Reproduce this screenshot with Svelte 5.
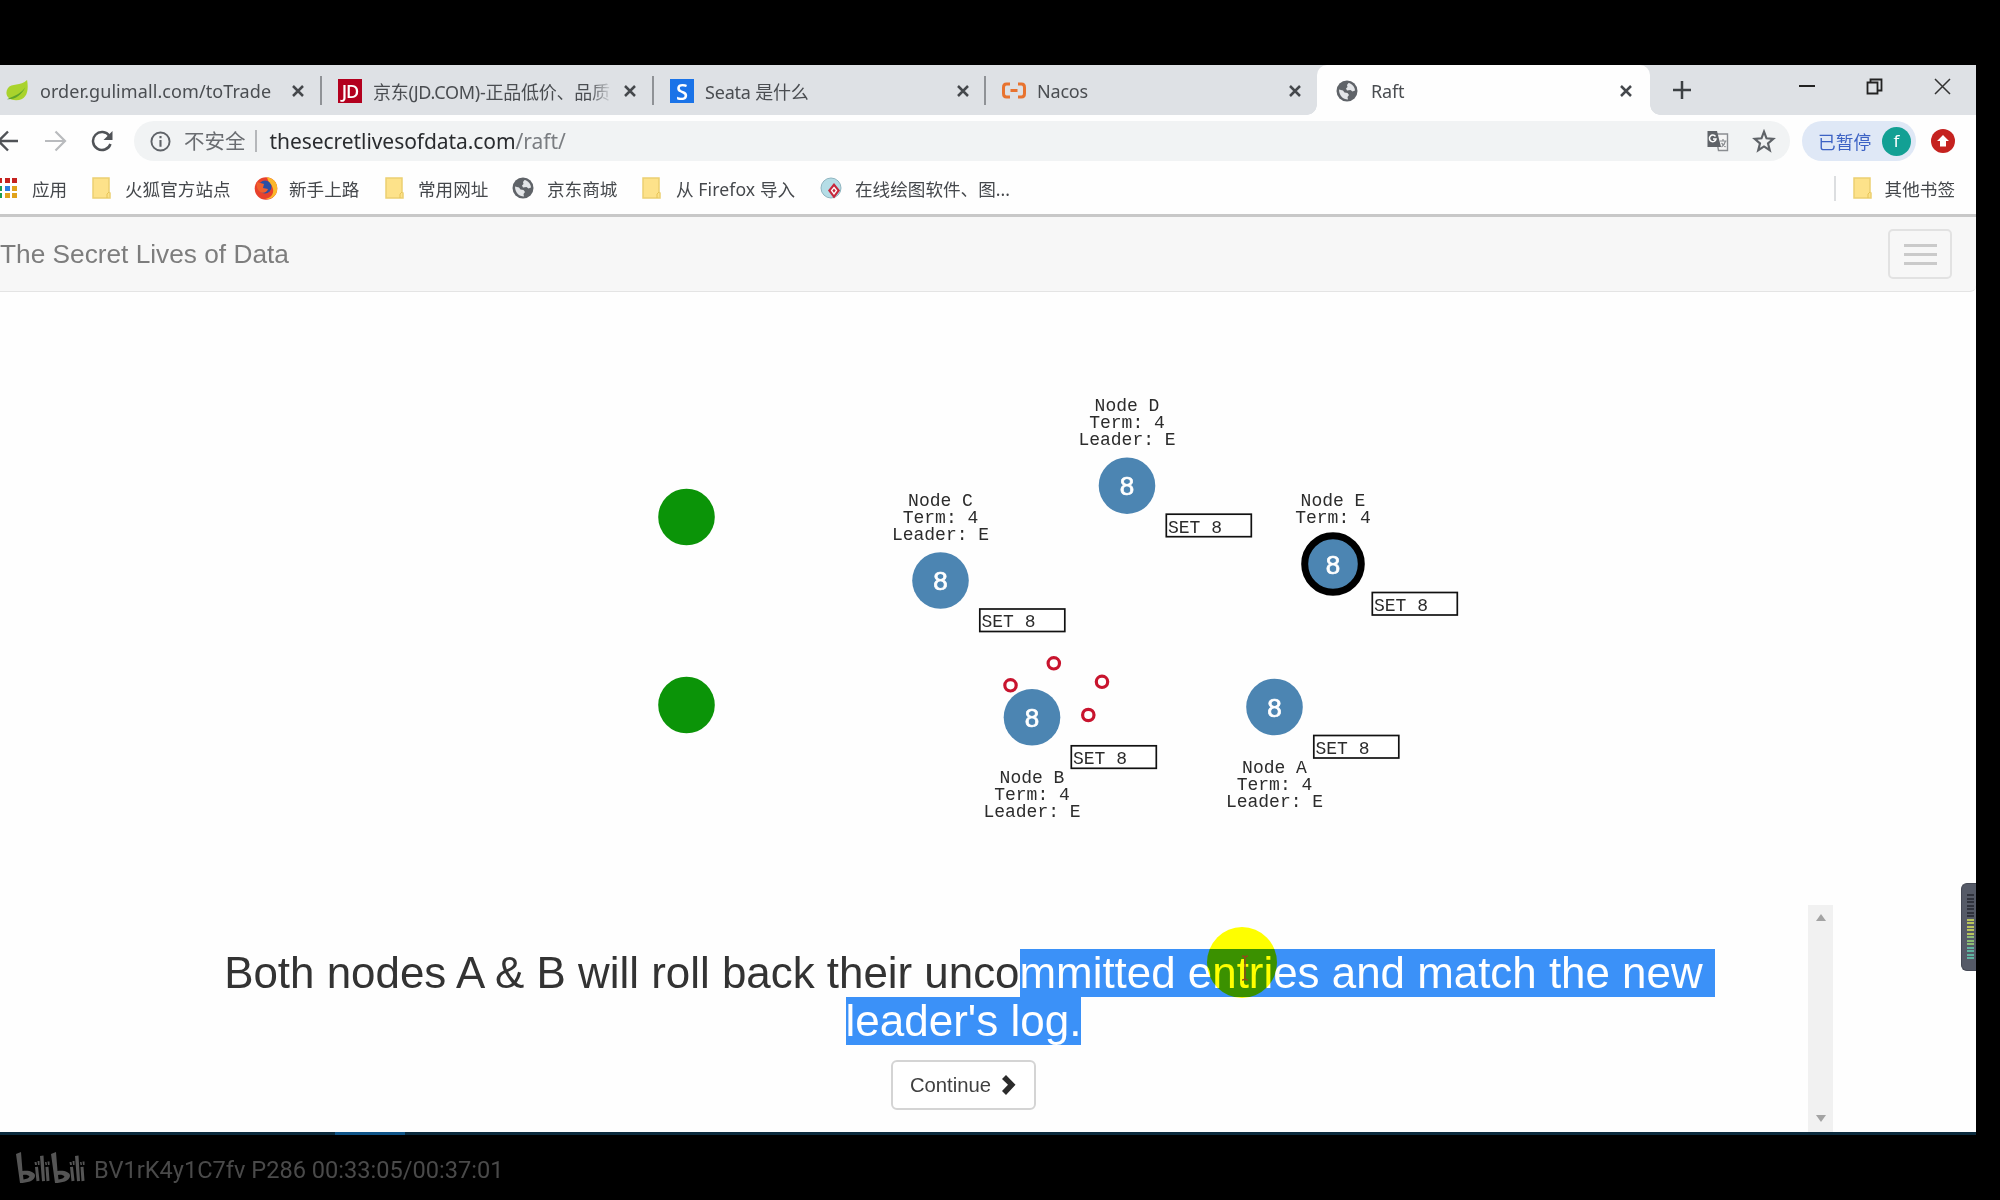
<script>
  const nodes = [
    { name: 'D', x: 1127, y: 485.7, lines: ['Node D', 'Term: 4', 'Leader: E'], above: true },
    { name: 'C', x: 940.5, y: 580.5, lines: ['Node C', 'Term: 4', 'Leader: E'], above: true },
    { name: 'E', x: 1333, y: 564, lines: ['Node E', 'Term: 4'], above: true, leader: true },
    { name: 'B', x: 1032, y: 717.3, lines: ['Node B', 'Term: 4', 'Leader: E'] },
    { name: 'A', x: 1274.5, y: 707, lines: ['Node A', 'Term: 4', 'Leader: E'] }
  ];
  const clients = [[686.5, 517], [686.5, 705]];
  const messages = [[1053.8, 663.3], [1010.5, 685.3], [1102, 681.8], [1088.3, 715]];
  const baseline = (n, i) =>
    n.above ? n.y - 41 - (n.lines.length - 1 - i) * 16.8 : n.y + 66 + i * 16.8;
  const appColors = ['#c5221f', '#c5221f', '#c5221f', '#1a9c50', '#2b7de0', '#e0a21b', '#1a9c50', '#e0a21b', '#e0a21b'];
  const meter = Array.from({ length: 19 }, (_, i) => i);
  const meterColor = (i) => (i < 7 ? '#2f323c' : i < 12 ? '#b9c45c' : i < 15 ? '#8cbd74' : '#5fb3a0');
</script>

{#snippet globe()}
  <svg class="globe" viewBox="0 0 22 22"><circle cx="11" cy="11" r="10.500" fill="#5f6368" /><path d="M12.500 3c3.500.5 6.500 4 6.500 7.500l-2.500 1-2-1.500-3.500.5-1-2 1.500-1.500-.5-2zM3 9.500l4 1 1.500 2 3 .5 1.500 2-1.500 2 .5 2.500c-5 0-9-4-9-10z" fill="#e3e5e8" /></svg>
{/snippet}
{#snippet close()}
  <svg class="close" viewBox="0 0 14 14"><path d="M2 2l10 10M12 2L2 12" stroke="#45484c" stroke-width="2.500" /></svg>
{/snippet}
{#snippet folder()}
  <svg class="folder" viewBox="0 0 19 22"><path d="M1 1h16v14l1 1v5H1z" fill="#fde28a" stroke="#ecd072" stroke-width="1.500" /><path d="M17 15l-2 2v4" stroke="#e6c456" fill="none" /></svg>
{/snippet}

<div class="screen">
  <div class="window">
    <div class="tabs">
      <div class="tab t1">
        <svg class="leaf" viewBox="0 0 26 24"><path d="M24 0c2 12 0 22-12 22C3 22-1 15 3 9c4-6 14-2 21-9z" fill="#a9d32c" /><path d="M2 21c8 1 16-4 20-13-4 6-10 9-20 13z" fill="#5fa52b" /></svg>
        <span class="title w1">order.gulimall.com/toTrade</span>{@render close()}
      </div>
      <div class="tab t2">
        <span class="fav jd">JD</span><span class="title w2">京东(JD.COM)-正品低价、品质</span>{@render close()}
      </div>
      <div class="tab t3">
        <span class="fav seata">S</span><span class="title">Seata 是什么</span>{@render close()}
      </div>
      <div class="tab t4">
        <svg class="nacos" viewBox="0 0 24 16"><path d="M8 1.500H4.500Q1.500 1.500 1.500 5v6q0 3.500 3 3.500H8M16 1.500h3.500q3 0 3 3.500v6q0 3.500-3 3.500H16M8.500 8h7" fill="none" stroke="#e8732f" stroke-width="3" /></svg>
        <span class="title">Nacos</span>{@render close()}
      </div>
      <div class="tab active">{@render globe()}<span class="title raft">Raft</span>{@render close()}</div>
      <svg class="plus" viewBox="0 0 18 18"><path d="M9 0v18M0 9h18" stroke="#3c4043" stroke-width="2.500" /></svg>
      <div class="controls">
        <svg width="16" height="16" viewBox="0 0 16 16"><path d="M0 8h16" stroke="#222" stroke-width="2" /></svg>
        <svg width="17" height="17" viewBox="0 0 17 17"><path d="M1.500 4.500h10v11h-10zM4.500 4.500v-3h11v11h-4" fill="none" stroke="#222" stroke-width="1.800" /></svg>
        <svg width="17" height="17" viewBox="0 0 17 17"><path d="M1 1l15 15M16 1L1 16" stroke="#333" stroke-width="1.500" /></svg>
      </div>
    </div>

    <div class="toolbar">
      <svg class="back" viewBox="0 0 22 22"><path d="M21 11H2M11 1.500L1.500 11l9.500 9.500" fill="none" stroke="#505357" stroke-width="2.400" /></svg>
      <svg class="fwd" viewBox="0 0 22 22"><path d="M0 11h19M10.500 1.500L20 11l-9.500 9.500" fill="none" stroke="#b9bbbe" stroke-width="2.200" /></svg>
      <svg class="reload" viewBox="0 0 22 22"><path d="M18.500 6A9 9 0 1 0 19.500 14" fill="none" stroke="#505357" stroke-width="2.500" /><path d="M21.500 1v9h-9z" fill="#505357" /></svg>
      <div class="omnibox">
        <svg class="info" viewBox="0 0 22 22"><circle cx="11" cy="11" r="9.500" fill="none" stroke="#5f6368" stroke-width="2" /><path d="M11 9.500v7M11 5.200v2.400" stroke="#5f6368" stroke-width="2.200" /></svg>
        <span class="insecure">不安全</span>
        <span class="url"><b>thesecretlivesofdata.com</b>/raft/</span>
        <svg class="translate" viewBox="0 0 22 22"><path d="M9 4h12v16.500H12z" fill="#f5f5f5" stroke="#8a8d91" stroke-width="1.400" /><path d="M1 1h9.500l4 16H1z" fill="#5f6368" /><path d="M9 6.500A3.300 3.300 0 1 0 9.500 9H6.500" fill="none" stroke="#fff" stroke-width="1.500" /><path d="M13.500 11H20M16.500 9v2M19 11q-1 4-4 6M15 13l4 4" fill="none" stroke="#8a8d91" stroke-width="1.200" /></svg>
        <svg class="star" viewBox="0 0 22 22"><path d="M11 2.500l2.300 6 6.200.5-4.800 4.200 1.600 6.300L11 16l-5.300 3.500 1.600-6.300L2.500 9l6.200-.5z" fill="none" stroke="#5f6368" stroke-width="2" /></svg>
      </div>
      <div class="profile"><span>已暂停</span><i>f</i></div>
      <svg class="update" viewBox="0 0 24 24"><circle cx="12" cy="12" r="12" fill="#c5221f" /><path d="M12 6l6 6h-3v5.500H9V12H6z" fill="#fff" /></svg>
    </div>

    <div class="bookmarks">
      <div class="apps">{#each appColors as c}<i style="background:{c}"></i>{/each}</div>
      <span class="bm b1">应用</span>
      {@render folder()}<span class="bm b2">火狐官方站点</span>
      <svg class="ff" viewBox="0 0 24 24"><circle cx="12" cy="12.500" r="11.300" fill="#e8412c" /><path d="M13 1c9 2 11 8 10 14-1 5-6 9-12 8 6-1 9-5 8-10-1-5-5-6-6-12z" fill="#fbb82a" /><circle cx="11" cy="11" r="6.500" fill="#2a4fa3" /><path d="M3 6l7 2-1 4 5 1c-1 4-6 5-9 2-2-2-3-5-2-9z" fill="#f0602c" /></svg>
      <span class="bm b3">新手上路</span>
      {@render folder()}<span class="bm b4">常用网址</span>
      {@render globe()}<span class="bm b5">京东商城</span>
      {@render folder()}<span class="bm b6">从 Firefox 导入</span>
      <svg class="draw" viewBox="0 0 22 22"><circle cx="11" cy="11" r="10" fill="#b5dde6" stroke="#8fb5c0" /><path d="M14 6l6 7.500-6 8-6-8z" fill="#c8283c" /><path d="M14 10.500l2.500 3-2.500 3.500-2.500-3.500z" fill="none" stroke="#fff" stroke-width="1.300" /></svg>
      <span class="bm b7">在线绘图软件、图...</span>
      <div class="other">{@render folder()}<span class="bm">其他书签</span></div>
    </div>

    <div class="navbar">
      <span class="brand">The Secret Lives of Data</span>
      <div class="burger"><i></i><i></i><i></i></div>
    </div>

    <div class="stage">
      <svg class="graph" viewBox="0 292 1976 613">
        {#each clients as [x, y]}<circle cx={x} cy={y} r="28.300" fill="#0b9408" />{/each}
        {#each nodes as n}
          {#if n.leader}<circle cx={n.x} cy={n.y} r="28.300" fill="#4c85b2" stroke="#000" stroke-width="7" />
          {:else}<circle cx={n.x} cy={n.y} r="28.300" fill="#4c85b2" />{/if}
          <text class="value" x={n.x} y={n.y + 9.6}>8</text>
          {#each n.lines as line, i}<text class="mono mid" x={n.x} y={baseline(n, i)}>{line}</text>{/each}
          <rect x={n.x + 39.300} y={n.y + 28.500} width="85" height="22.500" fill="#fff" stroke="#111" stroke-width="1.700" />
          <text class="mono" x={n.x + 41} y={n.y + 46.800}>SET 8</text>
        {/each}
        {#each messages as [x, y]}<circle cx={x} cy={y} r="5.700" fill="#fff" stroke="#c8142e" stroke-width="3.200" />{/each}
      </svg>
      <div class="meter">{#each meter as i}<i style="background:{meterColor(i)}"></i>{/each}</div>
    </div>

    <div class="caption">
      <div class="copy">
        <div class="line first"><span>Both nodes A &amp; B will roll back their unco</span><span class="sel">mmitted entries and match the new&nbsp;</span></div>
        <div class="line"><span class="sel">leader's log.</span></div>
        <div class="btn">Continue<svg viewBox="0 0 15 20"><path d="M1 4l4-4 9.500 9.800L5 20l-4-4 6-6.200z" fill="#2b2b2b" /></svg></div>
      </div>
      <div class="scroll"><i class="up"></i><i class="down"></i></div>
      <div class="spot"></div>
      <svg class="caret" viewBox="0 0 8 26"><path d="M1 1q3 0 3 2v20q0 2-3 2M7 1q-3 0-3 2M4 23q0 2 3 2" fill="none" stroke="#8f4a1c" stroke-width="1.500" /></svg>
    </div>
    <div class="taskbar"><i></i></div>
  </div>

  <div class="watermark">
    <svg viewBox="0 0 70 32" fill="#555">
      {#each [0, 35] as dx}
        <g transform="translate({dx} 0)">
          <path fill-rule="evenodd" d="M0 2L5 0l1.500 19c6-1 13 1 12.500 5-.5 5-8 7-15 7zM7 23l.5 4.500c3-.5 5.500-1.500 6-3-1-1.500-4-2-6.500-1.500z" />
          <path d="M19 15l3-.3 1.500 14-3 .5zM24 4l3.500-.5L29 29l-3 .3zM29.500 15l3-.3 1 14-3 .5zM18.500 10h2l.5 3h-2zM21.500 9h2v4h-1.500zM29 10h1.500l.5 3h-1.500zM31.500 9.500h2v3.500H32z" />
        </g>
      {/each}
    </svg>
    <span>BV1rK4y1C7fv P286 00:33:05/00:37:01</span>
  </div>
</div>

<style>
  :global(body) { background: #000; overflow: hidden; }
  .screen { width: 2000px; height: 1200px; box-sizing: border-box; padding-top: 65px; background: #000; font-family: "Noto Sans", "Noto Sans CJK SC", sans-serif; }
  .screen * { box-sizing: border-box; }
  .screen svg { flex: none; display: block; }
  .window { width: 1976px; height: 1070px; background: #fefefe; display: flex; flex-direction: column; overflow: hidden; }
  span { white-space: nowrap; }

  .tabs { height: 49.500px; flex: none; background: #dee1e5; display: flex; align-items: center; }
  .tab { height: 100%; display: flex; align-items: center; position: relative; font-size: 18px; color: #4a4d51; padding-top: 2px; }
  .tab .close { width: 14px; height: 14px; margin-left: auto; }
  .t1, .t2, .t3 { background: linear-gradient(#8f9296, #8f9296) right 11px / 2px 29px no-repeat; }
  .t1 { width: 322px; padding-left: 5px; padding-right: 17px; }
  .t2 { width: 332px; padding-left: 16px; padding-right: 17px; }
  .t3 { width: 332px; padding-left: 16px; padding-right: 16px; }
  .t4 { width: 331px; padding-left: 16px; padding-right: 15px; }
  .leaf { width: 24px; height: 22px; }
  .title { margin-left: 11px; letter-spacing: -0.2px; }
  .w1 { letter-spacing: 0.08px; }
  .w2 { width: 240px; overflow: hidden; letter-spacing: -0.25px; mask-image: linear-gradient(90deg, #000 90%, transparent); }
  .fav { width: 24px; height: 24px; color: #fff; text-align: center; font: 18px/24px "Open Sans", sans-serif; }
  .jd { background: #b3001e; letter-spacing: -1px; font-weight: 600; }
  .seata { background: #1a73e8; font-size: 22px; font-weight: 600; }
  .nacos { width: 24px; height: 17px; }
  .active { width: 333px; background: #fefefe; border-radius: 10px 10px 0 0; padding-left: 19px; padding-right: 17px; }
  .active::before, .active::after { content: ""; position: absolute; bottom: 0; width: 10px; height: 10px; }
  .active::before { left: -10px; background: radial-gradient(circle at 0 0, transparent 9.500px, #fefefe 10px); }
  .active::after { right: -10px; background: radial-gradient(circle at 100% 0, transparent 9.500px, #fefefe 10px); }
  .globe { width: 22px; height: 22px; }
  .raft { margin-left: 13px; }
  .plus { width: 18px; height: 18px; margin-left: 23px; margin-top: 1px; }
  .controls { margin-left: auto; display: flex; align-items: center; padding-right: 25px; gap: 51px; margin-top: -7px; }

  .toolbar { height: 53px; flex: none; display: flex; align-items: center; }
  .back { width: 22px; height: 22px; margin-left: -3px; }
  .fwd { width: 22px; height: 22px; margin-left: 26px; }
  .reload { width: 22px; height: 22px; margin-left: 24px; }
  .omnibox { width: 1656px; height: 40px; margin-left: 21px; border-radius: 20px; background: #f1f3f4; display: flex; align-items: center; padding: 0 14px 0 16px; }
  .info { width: 21px; height: 21px; }
  .insecure { font-size: 20.500px; color: #6a6d71; margin-left: 13px; padding-right: 9px; border-right: 2px solid #b5b7ba; line-height: 22px; }
  .url { margin-left: 13px; font-size: 21px; color: #7a7d81; letter-spacing: -0.06px; }
  .url b { font-weight: 400; color: #2a2c2f; }
  .translate { width: 23px; height: 22px; margin-left: auto; }
  .star { width: 24px; height: 24px; margin-left: 23px; }
  .profile { width: 114px; height: 40px; margin-left: 12px; border-radius: 20px; background: #dfe8f6; display: flex; align-items: center; justify-content: space-between; padding: 0 5px 0 16px; color: #3c62c4; font-size: 17.700px; }
  .profile i { width: 29px; height: 29px; border-radius: 50%; background: #12a094; color: #fff; text-align: center; font: 17px/28px "Noto Sans", sans-serif; }
  .update { width: 24px; height: 24px; margin-left: 15px; }

  .bookmarks { height: 46.500px; flex: none; display: flex; align-items: center; padding-bottom: 5px; }
  .apps { display: grid; grid-template-columns: repeat(3, 5px); gap: 2.500px; margin-left: -3px; width: 20px; flex: none; }
  .apps i { height: 5px; }
  .bm { font-size: 17.600px; color: #45484c; }
  .folder { width: 19px; height: 22px; }
  .b1 { margin-left: 15px; width: 60px; }
  .b2 { margin-left: 14px; width: 129px; }
  .ff { width: 24px; height: 24px; }
  .b3 { margin-left: 11px; width: 96px; }
  .b4 { margin-left: 14px; width: 94px; }
  .b5 { margin-left: 13px; width: 95px; }
  .b6 { margin-left: 15px; width: 144px; letter-spacing: 0.1px; }
  .draw { width: 22px; height: 22px; }
  .b7 { margin-left: 13px; }
  .other { margin-left: auto; margin-right: 21px; height: 25px; display: flex; align-items: center; gap: 13px; border-left: 2px solid #dcdee0; padding-left: 17px; }

  .navbar { height: 78px; flex: none; border-top: 3px solid #c8c8c8; border-bottom: 1.500px solid #e4e4e4; background: #f7f7f7; border-radius: 0 0 6px 0; display: flex; align-items: center; justify-content: space-between; }
  .brand { font: 26.250px "Liberation Sans", sans-serif; color: #7d7d7d; }
  .burger { width: 64px; height: 50px; margin-right: 24px; border: 2px solid #e2e2e2; border-radius: 5px; display: flex; flex-direction: column; align-items: center; justify-content: center; gap: 6px; }
  .burger i { width: 33px; height: 3px; background: #cacaca; }

  .stage { position: relative; height: 613px; flex: none; }
  .graph { width: 1976px; height: 613px; }
  .mono { font: 18px "Liberation Mono", monospace; fill: #2c2c2c; }
  .mid { text-anchor: middle; }
  .value { font: 26px "Liberation Sans", sans-serif; fill: #fff; stroke: #fff; stroke-width: 0.7px; text-anchor: middle; }
  .meter { position: absolute; right: 0; top: 591px; width: 15px; height: 88px; background: #555a67; border: 1.500px solid #454955; border-right: 0; border-radius: 6px 0 0 6px; display: flex; flex-direction: column; gap: 1.500px; padding: 10px 2px 0 4.500px; z-index: 2; }
  .meter i { height: 2px; flex: none; }

  .caption { position: relative; flex: 1; display: flex; }
  .copy { width: 1808px; padding: 44px 0 0 119px; display: flex; flex-direction: column; align-items: center; }
  .line { height: 48px; font: 44px/48px "Liberation Sans", sans-serif; color: #333; display: flex; }
  .first { margin-left: 12px; font-size: 43.900px; }
  .sel { background: #3b91f8; color: #fff; height: 48px; }
  .btn { width: 145px; height: 50px; margin-top: 15px; border: 2px solid #d4d4d4; border-radius: 6px; background: #fff; display: flex; align-items: center; justify-content: center; gap: 10px; padding-right: 1px; font: 20.300px "Liberation Sans", sans-serif; color: #404040; }
  .btn svg { width: 15px; height: 20px; }
  .scroll { width: 25px; background: #f1f1f1; display: flex; flex-direction: column; justify-content: space-between; align-items: center; padding: 9px 0 10px; }
  .scroll i { border: 5.500px solid transparent; }
  .scroll .up { border-bottom: 7px solid #a3a3a3; border-top: 0; }
  .scroll .down { border-top: 7px solid #a3a3a3; border-bottom: 0; }
  .spot { position: absolute; left: 1207px; top: 22px; width: 70px; height: 71px; border-radius: 50%; background: #ff0; mix-blend-mode: multiply; }
  .caret { position: absolute; left: 1241px; top: 50px; width: 8px; height: 26px; }
  .taskbar { height: 3px; flex: none; background: #0b2b3e; padding-left: 335px; }
  .taskbar i { display: block; width: 70px; height: 3px; background: #0f5488; }

  .watermark { height: 65px; display: flex; align-items: center; padding: 4px 0 0 16px; color: #4a4a4a; font: 23.600px Roboto, sans-serif; gap: 8px; }
  .watermark svg { width: 70px; height: 32px; margin-top: -3px; }
</style>
